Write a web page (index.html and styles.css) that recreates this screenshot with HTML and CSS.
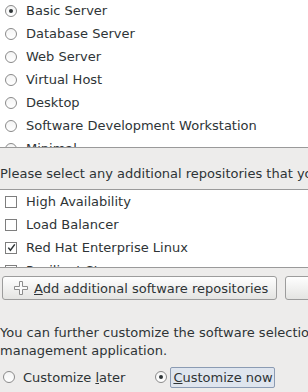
FILE: index.html
```html
<!DOCTYPE html>
<html lang="en">

<head>
  <meta charset="UTF-8" />
  <meta name="viewport" content="width=device-width, initial-scale=1.0" />
  <title>Software Selection</title>
  <link rel="stylesheet" href="styles.css">
</head>

<body>
  <!-- tipi di installazione -->
  <div class="list list-top">
    <div class="row first"><span class="radio checked"></span>Basic Server</div>
    <div class="row"><span class="radio"></span>Database Server</div>
    <div class="row"><span class="radio"></span>Web Server</div>
    <div class="row"><span class="radio"></span>Virtual Host</div>
    <div class="row"><span class="radio"></span>Desktop</div>
    <div class="row"><span class="radio"></span>Software Development Workstation</div>
    <div class="row"><span class="radio"></span>Minimal</div>
  </div>

  <p class="prompt">Please select any additional repositories that you want to use for software installation.</p>

  <!-- repository -->
  <div class="list list-repo">
    <div class="row"><span class="check"></span>High Availability</div>
    <div class="row"><span class="check"></span>Load Balancer</div>
    <div class="row">
      <span class="check">
        <svg width="11" height="11" viewBox="0 0 11 11"><path d="M2.3 5.6 L4.4 8.2 L8.8 2.4" fill="none" stroke="#2e3436" stroke-width="1.5" /></svg>
      </span>Red Hat Enterprise Linux
    </div>
    <div class="row"><span class="check"></span>Resilient Storage</div>
  </div>

  <div class="buttons">
    <button class="btn btn-add">
      <svg class="plus" width="16" height="16" viewBox="0 0 16 16"><path d="M6.5 1.5h3v5h5v3h-5v5h-3v-5h-5v-3h5z" fill="#fafafa" stroke="#8c8c8c" /></svg>
      <span><u>A</u>dd additional software repositories</span>
    </button>
    <button class="btn btn-modify">Modify repository</button>
  </div>

  <p class="note">You can further customize the software selection now, or after install via the software<br>management application.</p>

  <div class="choice">
    <div class="option"><span class="radio"></span><span>Customize <u>l</u>ater</span></div>
    <div class="option focus-wrap"><span class="radio checked"></span><span class="focus"><u>C</u>ustomize now</span></div>
  </div>
</body>

</html>
```

FILE: styles.css
```css
body {
  margin: 0;
  width: 308px;
  height: 392px;
  overflow: hidden;
  background-color: #edeceb;
  font-family: "DejaVu Sans", sans-serif;
  font-size: 13px;
  color: #2e3436;
}

.list {
  background-color: #fff;
  overflow: hidden;
}

.list-top {
  height: 147px;
  border-bottom: 1px solid #9a9a9a;
}

.list-repo {
  height: 77px;
  margin-top: 6px;
  border-top: 1px solid #9a9a9a;
  border-bottom: 1px solid #9a9a9a;
}

.row {
  display: flex;
  align-items: center;
  height: 23px;
  padding-left: 5px;
  white-space: nowrap;
}

.list-top .first {
  margin-top: -1px;
}

.radio {
  width: 10px;
  height: 10px;
  margin-right: 9px;
  border: 1px solid #8a8a8a;
  border-radius: 50%;
  background: linear-gradient(#f4f4f4, #fff);
  display: flex;
  align-items: center;
  justify-content: center;
  flex: none;
}

.radio.checked::after {
  content: "";
  width: 4px;
  height: 4px;
  border-radius: 50%;
  background-color: #2e3436;
}

.check {
  width: 10px;
  height: 10px;
  margin-right: 9px;
  border: 1px solid #7e7e7e;
  background-color: #fff;
  flex: none;
  display: flex;
  align-items: center;
  justify-content: center;
}

.check svg {
  flex: none;
}

.prompt {
  margin: 0;
  padding-top: 17px;
  line-height: 18px;
  white-space: nowrap;
}

.buttons {
  display: flex;
  gap: 8px;
  margin-top: 8px;
  padding-left: 2px;
}

.btn {
  flex: none;
  height: 24px;
  padding: 0;
  border: 1px solid #9c9c9c;
  border-radius: 3px;
  background: linear-gradient(#fefefe, #e4e4e2);
  font-family: inherit;
  font-size: 13px;
  color: #2e3436;
  display: flex;
  align-items: center;
}

.btn-add {
  width: 275px;
  padding-left: 10px;
}

.plus {
  margin-right: 5px;
}

.btn-modify {
  width: 190px;
  justify-content: center;
}

.note {
  margin: 24px 0 0;
  line-height: 18px;
  white-space: nowrap;
}

.choice {
  display: flex;
  align-items: center;
  height: 22px;
  margin-top: 6px;
}

.option {
  display: flex;
  align-items: center;
  padding-left: 3px;
}

.option .radio {
  margin-right: 8px;
}

.focus-wrap {
  margin-left: 27px;
}

.focus-wrap .radio {
  margin-right: 3px;
}

.focus {
  padding: 2px 1px 2px 2px;
  border: 1px solid #8b9bb3;
  border-radius: 2px;
  background-color: #dfe5ee;
}
```
